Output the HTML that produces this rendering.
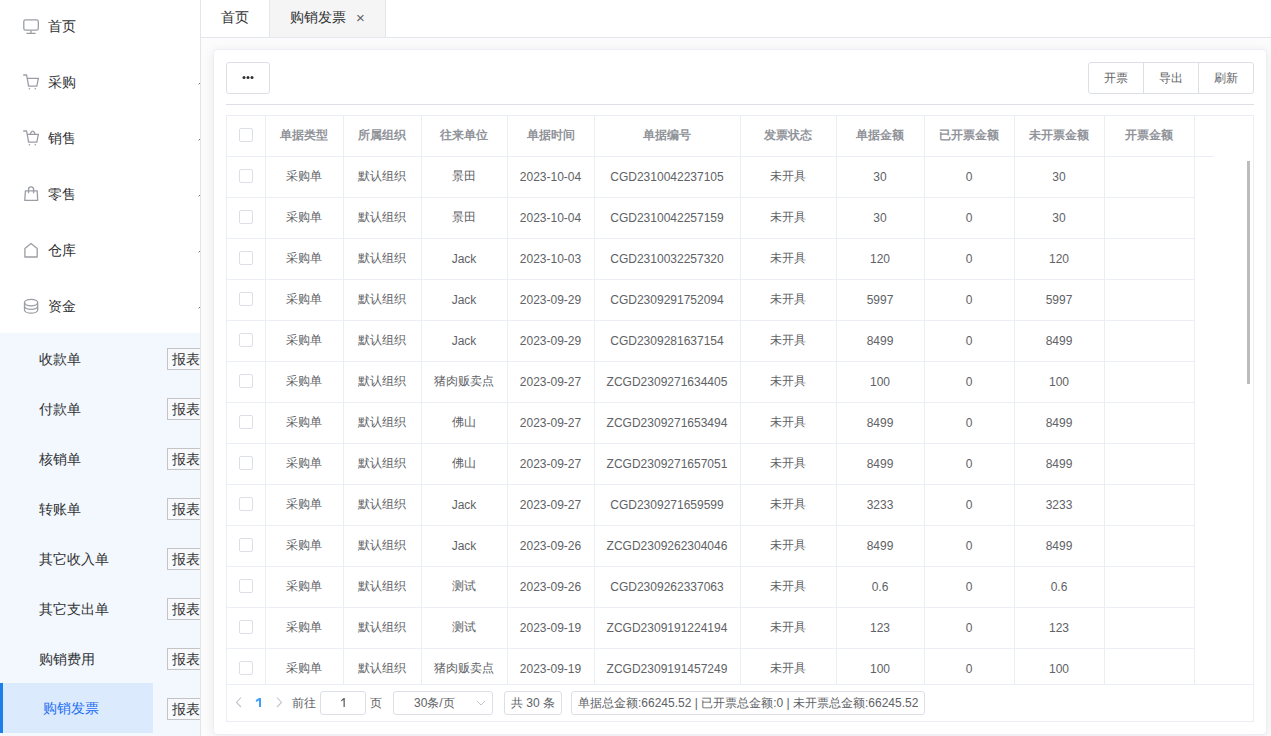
<!DOCTYPE html>
<html><head><meta charset="utf-8">
<style>
*{box-sizing:border-box;margin:0;padding:0}
html,body{width:1271px;height:736px;overflow:hidden;background:#fff;font-family:"Liberation Sans",sans-serif;}
.abs{position:absolute}
#side{position:absolute;left:0;top:0;width:201px;height:736px;background:#fff;border-right:1px solid #e2e5ea;overflow:hidden}
.mi{position:absolute;left:0;width:200px;height:56px;font-size:14px;color:#303133;line-height:56px}
.mi .t{position:absolute;left:48px;top:0}
.mi svg{position:absolute;left:23px;top:20px}
.mi .arr{position:absolute;left:199px;top:29px;width:1px;height:1px;background:#707070;box-shadow:-1px 1px 0 #d0d0d0}
#sub{position:absolute;left:0;top:333px;width:200px;height:403px;background:#f2f8fe}
.si{position:absolute;left:0;width:200px;height:50px;font-size:14px;color:#303133;line-height:50px}
.si .t{position:absolute;left:39px;top:1px}
.si .rb{position:absolute;left:167px;top:15px;width:40px;height:22px;border:1px solid #c4c4c4;background:#f7f9fc;font-size:14px;line-height:20px;padding-left:4px;color:#333}
.si.act .hl{position:absolute;left:0;top:0;width:153px;height:50px;background:#dbeafc;border-left:3px solid #1a7fe8}
.si.act .t{left:43px;top:0;color:#1f6ff2}
#main{position:absolute;left:201px;top:0;width:1070px;height:736px;background:#fcfcfd}
#tabs{position:absolute;left:0;top:0;width:1070px;height:38px;background:#fff;border-bottom:1px solid #e4e7ed}
.tab{position:absolute;top:0;height:37px;line-height:34px;font-size:14px;color:#303133}
#card{position:absolute;left:12px;top:49px;width:1054px;height:686px;background:#fff;border:1px solid #ebeef5;border-radius:4px;box-shadow:0 2px 12px rgba(0,0,0,.08)}
.btn{position:absolute;height:32px;border:1px solid #dcdfe6;background:#fff;font-size:12px;color:#606266;text-align:center;line-height:30px}
.cell{position:absolute;font-size:12px;color:#606266;text-align:center;white-space:nowrap}
.hcell{position:absolute;font-size:12px;color:#909399;font-weight:bold;text-align:center;white-space:nowrap}
.vl{position:absolute;width:1px;background:#ebeef5}
.hl2{position:absolute;height:1px;background:#ebeef5}
.cb{position:absolute;width:14px;height:14px;border:1px solid #dcdfe6;border-radius:2px;background:#fff}
</style></head><body>
<div id="side">
  <div class="mi" style="top:-2px">
    <span class="t">首页</span>
  </div>
  <div class="mi" style="top:54px">
    <span class="t">采购</span><div class="arr"></div>
  </div>
  <div class="mi" style="top:110px">
    <span class="t">销售</span><div class="arr"></div>
  </div>
  <div class="mi" style="top:166px">
    <span class="t">零售</span><div class="arr"></div>
  </div>
  <div class="mi" style="top:222px">
    <span class="t">仓库</span><div class="arr"></div>
  </div>
  <div class="mi" style="top:278px">
    <span class="t">资金</span><div class="arr"></div>
  </div>
<svg style="position:absolute;left:0;top:0" width="200" height="330" viewBox="0 0 200 330"><g fill="none" stroke="#9a9da5" stroke-width="1.3" stroke-linejoin="round">
<rect x="23.8" y="19.8" width="14.5" height="10.4" rx="1.8"/><path d="M31 30.4V33.2M26.4 33.4H35.6"/>
<path d="M23.2 75H26.6L28.6 86.2H36.8L38.4 78.3H27.4"/>
<path d="M23.2 131H26.6L28.6 142.2H36.8L38.4 134.3H27.4M30.1 134.2Q32.6 128.2 35.3 134.2"/>
<path d="M24.8 200.4L25.4 190.9H37.2L37.7 200.4Z"/><path d="M28.5 193.3V189.5A2.55 2.55 0 0 1 33.6 189.5V193.3"/>
<path d="M24.9 257V248.4L31 243.6L37.2 248.4V257Z"/>
<ellipse cx="31.1" cy="302.6" rx="6.6" ry="3.2"/><path d="M24.5 302.6V309.9A6.6 3.2 0 0 0 37.7 309.9V302.6M24.5 306.1A6.6 3.2 0 0 0 37.7 306.1"/>
</g><g fill="#9a9da5"><circle cx="29.4" cy="88.8" r=".8"/><circle cx="35.3" cy="88.8" r=".8"/><circle cx="29.4" cy="144.8" r=".8"/><circle cx="35.3" cy="144.8" r=".8"/></g></svg>
  <div id="sub">
    <div class="si" style="top:0"><span class="t">收款单</span><div class="rb">报表</div></div>
    <div class="si" style="top:50px"><span class="t">付款单</span><div class="rb">报表</div></div>
    <div class="si" style="top:100px"><span class="t">核销单</span><div class="rb">报表</div></div>
    <div class="si" style="top:150px"><span class="t">转账单</span><div class="rb">报表</div></div>
    <div class="si" style="top:200px"><span class="t">其它收入单</span><div class="rb">报表</div></div>
    <div class="si" style="top:250px"><span class="t">其它支出单</span><div class="rb">报表</div></div>
    <div class="si" style="top:300px"><span class="t">购销费用</span><div class="rb">报表</div></div>
    <div class="si act" style="top:350px"><div class="hl"></div><span class="t">购销发票</span><div class="rb">报表</div></div>
  </div>
</div>
<div id="main">
  <div id="tabs">
    <div class="tab" style="left:0;width:69px;border-right:1px solid #e4e7ed;padding-left:20px">首页</div>
    <div class="tab" style="left:69px;width:116px;background:#f5f5f5;border-right:1px solid #e4e7ed;padding-left:20px">购销发票<span style="position:absolute;left:86px;top:1px;font-size:15px;color:#606266">×</span></div>
  </div>
  <div id="card"></div>
</div>
<div id="tbl"><div class="abs" style="left:226px;top:115px;width:1028px;height:607px;border:1px solid #ebeef5;background:#fff"></div>
<div class="hl2" style="left:226px;top:156px;width:988px"></div>
<div class="abs" style="left:226px;top:156px;width:1028px;height:528px;overflow:hidden"><div class="cb" style="left:13px;top:13px"></div><div class="cell" style="left:39px;top:0px;width:78px;height:41px;line-height:41px">采购单</div><div class="cell" style="left:117px;top:0px;width:78px;height:41px;line-height:41px">默认组织</div><div class="cell" style="left:195px;top:0px;width:86px;height:41px;line-height:41px">景田</div><div class="cell" style="left:281px;top:1px;width:87px;height:41px;line-height:41px">2023-10-04</div><div class="cell" style="left:368px;top:1px;width:146px;height:41px;line-height:41px">CGD2310042237105</div><div class="cell" style="left:514px;top:0px;width:96px;height:41px;line-height:41px">未开具</div><div class="cell" style="left:610px;top:1px;width:88px;height:41px;line-height:41px">30</div><div class="cell" style="left:698px;top:1px;width:90px;height:41px;line-height:41px">0</div><div class="cell" style="left:788px;top:1px;width:90px;height:41px;line-height:41px">30</div><div class="hl2" style="left:0;top:41px;width:968px"></div><div class="cb" style="left:13px;top:54px"></div><div class="cell" style="left:39px;top:41px;width:78px;height:41px;line-height:41px">采购单</div><div class="cell" style="left:117px;top:41px;width:78px;height:41px;line-height:41px">默认组织</div><div class="cell" style="left:195px;top:41px;width:86px;height:41px;line-height:41px">景田</div><div class="cell" style="left:281px;top:42px;width:87px;height:41px;line-height:41px">2023-10-04</div><div class="cell" style="left:368px;top:42px;width:146px;height:41px;line-height:41px">CGD2310042257159</div><div class="cell" style="left:514px;top:41px;width:96px;height:41px;line-height:41px">未开具</div><div class="cell" style="left:610px;top:42px;width:88px;height:41px;line-height:41px">30</div><div class="cell" style="left:698px;top:42px;width:90px;height:41px;line-height:41px">0</div><div class="cell" style="left:788px;top:42px;width:90px;height:41px;line-height:41px">30</div><div class="hl2" style="left:0;top:82px;width:968px"></div><div class="cb" style="left:13px;top:95px"></div><div class="cell" style="left:39px;top:82px;width:78px;height:41px;line-height:41px">采购单</div><div class="cell" style="left:117px;top:82px;width:78px;height:41px;line-height:41px">默认组织</div><div class="cell" style="left:195px;top:83px;width:86px;height:41px;line-height:41px">Jack</div><div class="cell" style="left:281px;top:83px;width:87px;height:41px;line-height:41px">2023-10-03</div><div class="cell" style="left:368px;top:83px;width:146px;height:41px;line-height:41px">CGD2310032257320</div><div class="cell" style="left:514px;top:82px;width:96px;height:41px;line-height:41px">未开具</div><div class="cell" style="left:610px;top:83px;width:88px;height:41px;line-height:41px">120</div><div class="cell" style="left:698px;top:83px;width:90px;height:41px;line-height:41px">0</div><div class="cell" style="left:788px;top:83px;width:90px;height:41px;line-height:41px">120</div><div class="hl2" style="left:0;top:123px;width:968px"></div><div class="cb" style="left:13px;top:136px"></div><div class="cell" style="left:39px;top:123px;width:78px;height:41px;line-height:41px">采购单</div><div class="cell" style="left:117px;top:123px;width:78px;height:41px;line-height:41px">默认组织</div><div class="cell" style="left:195px;top:124px;width:86px;height:41px;line-height:41px">Jack</div><div class="cell" style="left:281px;top:124px;width:87px;height:41px;line-height:41px">2023-09-29</div><div class="cell" style="left:368px;top:124px;width:146px;height:41px;line-height:41px">CGD2309291752094</div><div class="cell" style="left:514px;top:123px;width:96px;height:41px;line-height:41px">未开具</div><div class="cell" style="left:610px;top:124px;width:88px;height:41px;line-height:41px">5997</div><div class="cell" style="left:698px;top:124px;width:90px;height:41px;line-height:41px">0</div><div class="cell" style="left:788px;top:124px;width:90px;height:41px;line-height:41px">5997</div><div class="hl2" style="left:0;top:164px;width:968px"></div><div class="cb" style="left:13px;top:177px"></div><div class="cell" style="left:39px;top:164px;width:78px;height:41px;line-height:41px">采购单</div><div class="cell" style="left:117px;top:164px;width:78px;height:41px;line-height:41px">默认组织</div><div class="cell" style="left:195px;top:165px;width:86px;height:41px;line-height:41px">Jack</div><div class="cell" style="left:281px;top:165px;width:87px;height:41px;line-height:41px">2023-09-29</div><div class="cell" style="left:368px;top:165px;width:146px;height:41px;line-height:41px">CGD2309281637154</div><div class="cell" style="left:514px;top:164px;width:96px;height:41px;line-height:41px">未开具</div><div class="cell" style="left:610px;top:165px;width:88px;height:41px;line-height:41px">8499</div><div class="cell" style="left:698px;top:165px;width:90px;height:41px;line-height:41px">0</div><div class="cell" style="left:788px;top:165px;width:90px;height:41px;line-height:41px">8499</div><div class="hl2" style="left:0;top:205px;width:968px"></div><div class="cb" style="left:13px;top:218px"></div><div class="cell" style="left:39px;top:205px;width:78px;height:41px;line-height:41px">采购单</div><div class="cell" style="left:117px;top:205px;width:78px;height:41px;line-height:41px">默认组织</div><div class="cell" style="left:195px;top:205px;width:86px;height:41px;line-height:41px">猪肉贩卖点</div><div class="cell" style="left:281px;top:206px;width:87px;height:41px;line-height:41px">2023-09-27</div><div class="cell" style="left:368px;top:206px;width:146px;height:41px;line-height:41px">ZCGD2309271634405</div><div class="cell" style="left:514px;top:205px;width:96px;height:41px;line-height:41px">未开具</div><div class="cell" style="left:610px;top:206px;width:88px;height:41px;line-height:41px">100</div><div class="cell" style="left:698px;top:206px;width:90px;height:41px;line-height:41px">0</div><div class="cell" style="left:788px;top:206px;width:90px;height:41px;line-height:41px">100</div><div class="hl2" style="left:0;top:246px;width:968px"></div><div class="cb" style="left:13px;top:259px"></div><div class="cell" style="left:39px;top:246px;width:78px;height:41px;line-height:41px">采购单</div><div class="cell" style="left:117px;top:246px;width:78px;height:41px;line-height:41px">默认组织</div><div class="cell" style="left:195px;top:246px;width:86px;height:41px;line-height:41px">佛山</div><div class="cell" style="left:281px;top:247px;width:87px;height:41px;line-height:41px">2023-09-27</div><div class="cell" style="left:368px;top:247px;width:146px;height:41px;line-height:41px">ZCGD2309271653494</div><div class="cell" style="left:514px;top:246px;width:96px;height:41px;line-height:41px">未开具</div><div class="cell" style="left:610px;top:247px;width:88px;height:41px;line-height:41px">8499</div><div class="cell" style="left:698px;top:247px;width:90px;height:41px;line-height:41px">0</div><div class="cell" style="left:788px;top:247px;width:90px;height:41px;line-height:41px">8499</div><div class="hl2" style="left:0;top:287px;width:968px"></div><div class="cb" style="left:13px;top:300px"></div><div class="cell" style="left:39px;top:287px;width:78px;height:41px;line-height:41px">采购单</div><div class="cell" style="left:117px;top:287px;width:78px;height:41px;line-height:41px">默认组织</div><div class="cell" style="left:195px;top:287px;width:86px;height:41px;line-height:41px">佛山</div><div class="cell" style="left:281px;top:288px;width:87px;height:41px;line-height:41px">2023-09-27</div><div class="cell" style="left:368px;top:288px;width:146px;height:41px;line-height:41px">ZCGD2309271657051</div><div class="cell" style="left:514px;top:287px;width:96px;height:41px;line-height:41px">未开具</div><div class="cell" style="left:610px;top:288px;width:88px;height:41px;line-height:41px">8499</div><div class="cell" style="left:698px;top:288px;width:90px;height:41px;line-height:41px">0</div><div class="cell" style="left:788px;top:288px;width:90px;height:41px;line-height:41px">8499</div><div class="hl2" style="left:0;top:328px;width:968px"></div><div class="cb" style="left:13px;top:341px"></div><div class="cell" style="left:39px;top:328px;width:78px;height:41px;line-height:41px">采购单</div><div class="cell" style="left:117px;top:328px;width:78px;height:41px;line-height:41px">默认组织</div><div class="cell" style="left:195px;top:329px;width:86px;height:41px;line-height:41px">Jack</div><div class="cell" style="left:281px;top:329px;width:87px;height:41px;line-height:41px">2023-09-27</div><div class="cell" style="left:368px;top:329px;width:146px;height:41px;line-height:41px">CGD2309271659599</div><div class="cell" style="left:514px;top:328px;width:96px;height:41px;line-height:41px">未开具</div><div class="cell" style="left:610px;top:329px;width:88px;height:41px;line-height:41px">3233</div><div class="cell" style="left:698px;top:329px;width:90px;height:41px;line-height:41px">0</div><div class="cell" style="left:788px;top:329px;width:90px;height:41px;line-height:41px">3233</div><div class="hl2" style="left:0;top:369px;width:968px"></div><div class="cb" style="left:13px;top:382px"></div><div class="cell" style="left:39px;top:369px;width:78px;height:41px;line-height:41px">采购单</div><div class="cell" style="left:117px;top:369px;width:78px;height:41px;line-height:41px">默认组织</div><div class="cell" style="left:195px;top:370px;width:86px;height:41px;line-height:41px">Jack</div><div class="cell" style="left:281px;top:370px;width:87px;height:41px;line-height:41px">2023-09-26</div><div class="cell" style="left:368px;top:370px;width:146px;height:41px;line-height:41px">ZCGD2309262304046</div><div class="cell" style="left:514px;top:369px;width:96px;height:41px;line-height:41px">未开具</div><div class="cell" style="left:610px;top:370px;width:88px;height:41px;line-height:41px">8499</div><div class="cell" style="left:698px;top:370px;width:90px;height:41px;line-height:41px">0</div><div class="cell" style="left:788px;top:370px;width:90px;height:41px;line-height:41px">8499</div><div class="hl2" style="left:0;top:410px;width:968px"></div><div class="cb" style="left:13px;top:423px"></div><div class="cell" style="left:39px;top:410px;width:78px;height:41px;line-height:41px">采购单</div><div class="cell" style="left:117px;top:410px;width:78px;height:41px;line-height:41px">默认组织</div><div class="cell" style="left:195px;top:410px;width:86px;height:41px;line-height:41px">测试</div><div class="cell" style="left:281px;top:411px;width:87px;height:41px;line-height:41px">2023-09-26</div><div class="cell" style="left:368px;top:411px;width:146px;height:41px;line-height:41px">CGD2309262337063</div><div class="cell" style="left:514px;top:410px;width:96px;height:41px;line-height:41px">未开具</div><div class="cell" style="left:610px;top:411px;width:88px;height:41px;line-height:41px">0.6</div><div class="cell" style="left:698px;top:411px;width:90px;height:41px;line-height:41px">0</div><div class="cell" style="left:788px;top:411px;width:90px;height:41px;line-height:41px">0.6</div><div class="hl2" style="left:0;top:451px;width:968px"></div><div class="cb" style="left:13px;top:464px"></div><div class="cell" style="left:39px;top:451px;width:78px;height:41px;line-height:41px">采购单</div><div class="cell" style="left:117px;top:451px;width:78px;height:41px;line-height:41px">默认组织</div><div class="cell" style="left:195px;top:451px;width:86px;height:41px;line-height:41px">测试</div><div class="cell" style="left:281px;top:452px;width:87px;height:41px;line-height:41px">2023-09-19</div><div class="cell" style="left:368px;top:452px;width:146px;height:41px;line-height:41px">ZCGD2309191224194</div><div class="cell" style="left:514px;top:451px;width:96px;height:41px;line-height:41px">未开具</div><div class="cell" style="left:610px;top:452px;width:88px;height:41px;line-height:41px">123</div><div class="cell" style="left:698px;top:452px;width:90px;height:41px;line-height:41px">0</div><div class="cell" style="left:788px;top:452px;width:90px;height:41px;line-height:41px">123</div><div class="hl2" style="left:0;top:492px;width:968px"></div><div class="cb" style="left:13px;top:505px"></div><div class="cell" style="left:39px;top:492px;width:78px;height:41px;line-height:41px">采购单</div><div class="cell" style="left:117px;top:492px;width:78px;height:41px;line-height:41px">默认组织</div><div class="cell" style="left:195px;top:492px;width:86px;height:41px;line-height:41px">猪肉贩卖点</div><div class="cell" style="left:281px;top:493px;width:87px;height:41px;line-height:41px">2023-09-19</div><div class="cell" style="left:368px;top:493px;width:146px;height:41px;line-height:41px">ZCGD2309191457249</div><div class="cell" style="left:514px;top:492px;width:96px;height:41px;line-height:41px">未开具</div><div class="cell" style="left:610px;top:493px;width:88px;height:41px;line-height:41px">100</div><div class="cell" style="left:698px;top:493px;width:90px;height:41px;line-height:41px">0</div><div class="cell" style="left:788px;top:493px;width:90px;height:41px;line-height:41px">100</div><div class="hl2" style="left:0;top:533px;width:968px"></div><div class="vl" style="left:39px;top:0;height:528px"></div><div class="vl" style="left:117px;top:0;height:528px"></div><div class="vl" style="left:195px;top:0;height:528px"></div><div class="vl" style="left:281px;top:0;height:528px"></div><div class="vl" style="left:368px;top:0;height:528px"></div><div class="vl" style="left:514px;top:0;height:528px"></div><div class="vl" style="left:610px;top:0;height:528px"></div><div class="vl" style="left:698px;top:0;height:528px"></div><div class="vl" style="left:788px;top:0;height:528px"></div><div class="vl" style="left:878px;top:0;height:528px"></div><div class="vl" style="left:968px;top:0;height:528px"></div><div class="abs" style="left:1021px;top:5px;width:3px;height:223px;background:#bcbcbc"></div></div>
<div class="vl" style="left:265px;top:115px;height:41px"></div>
<div class="vl" style="left:343px;top:115px;height:41px"></div>
<div class="vl" style="left:421px;top:115px;height:41px"></div>
<div class="vl" style="left:507px;top:115px;height:41px"></div>
<div class="vl" style="left:594px;top:115px;height:41px"></div>
<div class="vl" style="left:740px;top:115px;height:41px"></div>
<div class="vl" style="left:836px;top:115px;height:41px"></div>
<div class="vl" style="left:924px;top:115px;height:41px"></div>
<div class="vl" style="left:1014px;top:115px;height:41px"></div>
<div class="vl" style="left:1104px;top:115px;height:41px"></div>
<div class="vl" style="left:1194px;top:115px;height:41px"></div>
<div class="cb" style="left:239px;top:128px"></div>
<div class="hcell" style="left:265px;top:115px;width:78px;height:41px;line-height:41px">单据类型</div>
<div class="hcell" style="left:343px;top:115px;width:78px;height:41px;line-height:41px">所属组织</div>
<div class="hcell" style="left:421px;top:115px;width:86px;height:41px;line-height:41px">往来单位</div>
<div class="hcell" style="left:507px;top:115px;width:87px;height:41px;line-height:41px">单据时间</div>
<div class="hcell" style="left:594px;top:115px;width:146px;height:41px;line-height:41px">单据编号</div>
<div class="hcell" style="left:740px;top:115px;width:96px;height:41px;line-height:41px">发票状态</div>
<div class="hcell" style="left:836px;top:115px;width:88px;height:41px;line-height:41px">单据金额</div>
<div class="hcell" style="left:924px;top:115px;width:90px;height:41px;line-height:41px">已开票金额</div>
<div class="hcell" style="left:1014px;top:115px;width:90px;height:41px;line-height:41px">未开票金额</div>
<div class="hcell" style="left:1104px;top:115px;width:90px;height:41px;line-height:41px">开票金额</div>
<div class="hl2" style="left:226px;top:684px;width:1028px"></div>
<div class="btn" style="left:226px;top:62px;width:44px;border-radius:3px"></div>
<svg class="abs" style="left:240px;top:74px" width="16" height="8"><circle cx="4" cy="3.6" r="1.5" fill="#303133"/><circle cx="8" cy="3.6" r="1.5" fill="#303133"/><circle cx="12" cy="3.6" r="1.5" fill="#303133"/></svg>
<div class="abs" style="left:1088px;top:62px;width:166px;height:32px;border:1px solid #dcdfe6;border-radius:3px;background:#fff"></div>
<div class="cell" style="left:1089px;top:62px;width:54px;height:32px;line-height:32px;color:#606266">开票</div>
<div class="cell" style="left:1144px;top:62px;width:54px;height:32px;line-height:32px;color:#606266">导出</div>
<div class="cell" style="left:1199px;top:62px;width:54px;height:32px;line-height:32px;color:#606266">刷新</div>
<div class="vl" style="left:1143px;top:63px;height:30px;background:#dcdfe6"></div>
<div class="vl" style="left:1198px;top:63px;height:30px;background:#dcdfe6"></div>
<div class="hl2" style="left:226px;top:104px;width:1028px;height:1px;background:#dcdfe6"></div>
<svg class="abs" style="left:234px;top:696px" width="10" height="12"><path d="M7 1.5L2.5 6.5L7 11" fill="none" stroke="#c0c4cc" stroke-width="1.1"/></svg>
<svg class="abs" style="left:250px;top:690px" width="20" height="20" viewBox="250 690 20 20"><path d="M255.9 700.1L259 698H261V707H259V700.6L255.9 702.1Z" fill="#409eff"/></svg>
<svg class="abs" style="left:274px;top:696px" width="10" height="12"><path d="M3 1.5L7.5 6.5L3 11" fill="none" stroke="#c0c4cc" stroke-width="1.1"/></svg>
<div style="font-size:12px;color:#606266;position:absolute;white-space:nowrap;left:292px;top:692px;line-height:22px">前往</div>
<div style="font-size:12px;color:#606266;position:absolute;white-space:nowrap;left:320px;top:691px;width:46px;height:24px;border:1px solid #dcdfe6;border-radius:3px;text-align:center;line-height:22px"></div>
<svg class="abs" style="left:334px;top:690px" width="20" height="20" viewBox="334 690 20 20"><path d="M341.2 700.3L343.6 698H344.8V707H343.5V699.9L341.2 701.5Z" fill="#606266"/></svg>
<div style="font-size:12px;color:#606266;position:absolute;white-space:nowrap;left:370px;top:692px;line-height:22px">页</div>
<div style="font-size:12px;color:#606266;position:absolute;white-space:nowrap;left:393px;top:691px;width:100px;height:24px;border:1px solid #dcdfe6;border-radius:3px;line-height:22px;padding-left:20px">30条/页</div>
<svg class="abs" style="left:476px;top:699px" width="10" height="8" viewBox="0 0 10 8"><path d="M1 2l4 4 4-4" fill="none" stroke="#c0c4cc" stroke-width="1"/></svg>
<div style="font-size:12px;color:#606266;position:absolute;white-space:nowrap;left:504px;top:691px;width:58px;height:24px;border:1px solid #dcdfe6;border-radius:3px;line-height:22px;text-align:center">共 30 条</div>
<div style="font-size:12px;color:#606266;position:absolute;white-space:nowrap;left:571px;top:691px;width:354px;height:24px;border:1px solid #dcdfe6;border-radius:3px;line-height:22px;padding-left:6px">单据总金额:66245.52 | 已开票总金额:0 | 未开票总金额:66245.52</div></div>
</body></html>
